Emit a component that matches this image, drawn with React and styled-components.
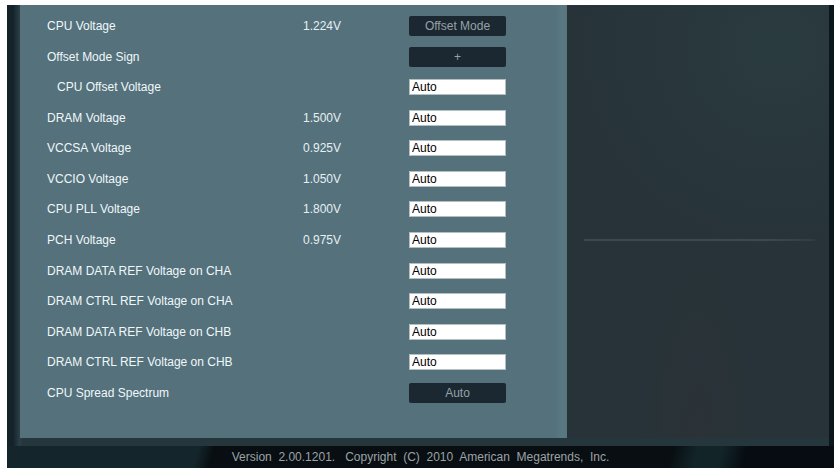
import { Fragment, useState } from "react";
import styled, { createGlobalStyle } from "styled-components";

const SETTINGS = [
  { id: "cpu-voltage", label: "CPU Voltage", reading: "1.224V", options: ["Offset Mode", "Manual Mode"] },
  { id: "offset-sign", label: "Offset Mode Sign", options: ["+", "-"] },
  { id: "cpu-offset", label: "CPU Offset Voltage", nested: true },
  { id: "dram", label: "DRAM Voltage", reading: "1.500V" },
  { id: "vccsa", label: "VCCSA Voltage", reading: "0.925V" },
  { id: "vccio", label: "VCCIO Voltage", reading: "1.050V" },
  { id: "cpu-pll", label: "CPU PLL Voltage", reading: "1.800V" },
  { id: "pch", label: "PCH Voltage", reading: "0.975V" },
  { id: "data-ref-cha", label: "DRAM DATA REF Voltage on CHA" },
  { id: "ctrl-ref-cha", label: "DRAM CTRL REF Voltage on CHA" },
  { id: "data-ref-chb", label: "DRAM DATA REF Voltage on CHB" },
  { id: "ctrl-ref-chb", label: "DRAM CTRL REF Voltage on CHB" },
  { id: "spread-spectrum", label: "CPU Spread Spectrum", options: ["Auto", "Disabled"] },
];

const OptionControl = ({ id, options }) => {
  const [index, setIndex] = useState(0);

  return (
    <OptionButton
      id={id}
      type="button"
      onClick={() => setIndex((index + 1) % options.length)}
    >
      {options[index]}
    </OptionButton>
  );
};

const VoltageControl = ({ id }) => {
  const [value, setValue] = useState("Auto");

  return (
    <VoltageInput
      id={id}
      type="text"
      value={value}
      onChange={(e) => setValue(e.target.value)}
    />
  );
};

export default function App() {
  return (
    <>
      <GlobalStyle />
      <Screen>
        <Frame>
          <SettingsPanel>
            {SETTINGS.map(({ id, label, reading, nested, options }) => (
              <Fragment key={id}>
                <Label htmlFor={id} $nested={nested}>
                  {label}
                </Label>
                <Reading>{reading}</Reading>
                {options ? (
                  <OptionControl id={id} options={options} />
                ) : (
                  <VoltageControl id={id} />
                )}
              </Fragment>
            ))}
          </SettingsPanel>
          <HelpPanel>
            <Divider />
          </HelpPanel>
        </Frame>
        <Footer>{"Version  2.00.1201.   Copyright  (C)  2010  American  Megatrends,  Inc."}</Footer>
      </Screen>
    </>
  );
}

const GlobalStyle = createGlobalStyle`
  * {
    box-sizing: border-box;
  }

  body {
    margin: 0;
    background-color: white;
    font-family: "Liberation Sans", Arial, sans-serif;
    font-size: 12px;
  }
`;

const Screen = styled.div`
  min-height: 100vh;
  padding: 5px 0 0 7px;
  display: flex;
  flex-direction: column;
  background: #0a161c content-box;
`;

const Frame = styled.main`
  flex: 1;
  display: grid;
  grid-template-columns: minmax(0, 547fr) minmax(0, 262fr);
  margin-right: 5px;
  padding: 0 0 8px 13px;
  background: linear-gradient(
    to right,
    #14232a 0,
    #14232a 6px,
    #2c4048 13px,
    #26363d 15px
  );
`;

const SettingsPanel = styled.form`
  display: grid;
  grid-template-columns: minmax(0, 256fr) minmax(0, 106fr) 97px;
  grid-auto-rows: minmax(24px, 1fr);
  align-items: center;
  padding: 6px 61px 30px 27px;
  background: linear-gradient(
    to right,
    #54717c calc(100% - 14px),
    #587884 calc(100% - 5px),
    #5a7679
  );
`;

const Label = styled.label`
  padding-left: ${({ $nested }) => ($nested ? 10 : 0)}px;
  color: #f0f8fa;
  white-space: nowrap;
`;

const Reading = styled.span`
  color: #e6f0f2;
`;

const OptionButton = styled.button`
  height: 20px;
  padding: 0 4px;
  border: 0;
  border-radius: 2px;
  background-color: #1b2831;
  color: #97a2a8;
  font: inherit;
  line-height: 20px;
  cursor: pointer;

  &:hover {
    color: white;
  }
`;

const VoltageInput = styled.input`
  width: 100%;
  height: 16px;
  padding: 0 2px;
  border: 1px solid #b4bfc4;
  border-radius: 0;
  background-color: white;
  color: black;
  font: inherit;
`;

const HelpPanel = styled.aside`
  padding: 0 14px 0 17px;
  display: flex;
  flex-direction: column;
  justify-content: center;
  background: radial-gradient(circle at 80% 10%, #2a3b40 0, #2a3b4000 45%),
    radial-gradient(ellipse at 50% 100%, #2b3238 0, #2b323800 30%),
    #273338;
`;

const Divider = styled.hr`
  width: 100%;
  height: 2px;
  margin: 36px 0 0;
  border: 0;
  background: linear-gradient(to right, #3c494e 80%, #303c41);
`;

const Footer = styled.footer`
  padding: 3px 0;
  background: linear-gradient(
    105deg,
    #14262b 23%,
    #080e12 25%,
    #080e12 80%,
    #122428 83%,
    #122428 86%,
    #060c12 89%
  );
  color: #9ca3a6;
  line-height: 16px;
  text-align: center;
  white-space: pre-wrap;
`;
